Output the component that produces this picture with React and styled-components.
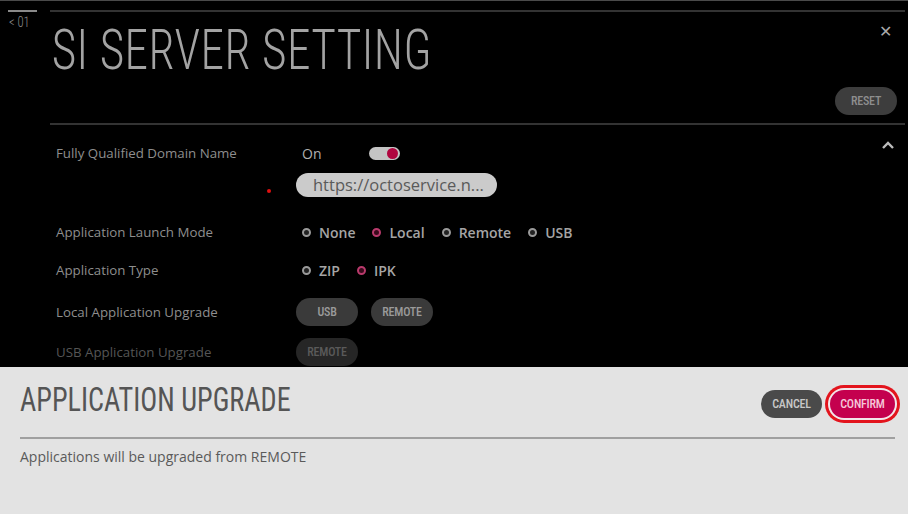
import React from "react";
import styled, { createGlobalStyle } from "styled-components";

const GlobalStyle = createGlobalStyle`
  html, body { margin: 0; padding: 0; background: #000; }
  body { width: 908px; height: 514px; overflow: hidden; font-family: "Open Sans", "Noto Sans", sans-serif; }
  * { box-sizing: border-box; }
`;

const COND = `"Roboto Condensed", "DejaVu Sans Condensed", "Liberation Sans Narrow", Roboto, sans-serif`;

const Screen = styled.div`
  position: relative;
  width: 908px;
  height: 514px;
  display: flex;
  background: #000;
  border-top: 1px solid #4a4a4a;
`;

const SideNav = styled.div`
  width: 50px;
  padding: 9px 0 0 8px;
  display: flex;
  flex-direction: column;
  gap: 2px;
`;

const IndexBar = styled.div`
  width: 29px;
  height: 2px;
  background: #8a8a8a;
`;

const IndexLabel = styled.span`
  font-family: ${COND};
  font-size: 14px;
  font-weight: 300;
  color: #8c8c8c;
  line-height: 17px;
  padding-left: 1px;
  display: inline-block;
  transform: scaleX(0.9);
  transform-origin: left center;
`;

const Main = styled.div`
  flex: 1;
  margin-right: 3px;
  display: flex;
  flex-direction: column;
`;

const Header = styled.div`
  margin-top: 9px;
  height: 115px;
  border-top: 2px solid #333;
  border-bottom: 2px solid #333;
  display: flex;
  justify-content: space-between;
`;

const Title = styled.h1`
  margin: 0;
  padding: 6px 0 0 2px;
  font-family: ${COND};
  font-weight: 300;
  font-size: 56px;
  line-height: 64px;
  color: #a3a3a3;
  letter-spacing: 0.5px;
  white-space: nowrap;
  transform: scaleX(0.845);
  transform-origin: left top;
`;

const HeaderSide = styled.div`
  display: flex;
  flex-direction: column;
  align-items: flex-end;
  justify-content: space-between;
  padding: 11px 8px 8px 0;
`;

const CloseBtn = styled.span`
  color: #aaa;
  font-size: 16px;
  line-height: 16px;
  margin-right: 5px;
`;

const Pill = styled.div`
  display: inline-flex;
  align-items: center;
  justify-content: center;
  height: ${(p) => p.$h || 28}px;
  min-width: ${(p) => p.$w || 62}px;
  padding: 0 10px;
  border-radius: 14px;
  background: ${(p) => p.$bg || "#3a3a3a"};
  color: ${(p) => p.$fg || "#9a9a9a"};
  font-family: ${COND};
  font-size: 12px;
  font-weight: 500;
  letter-spacing: -0.2px;
`;

const List = styled.div`
  padding: 16px 0 0 6px;
  display: flex;
  flex-direction: column;
`;

const Row = styled.div`
  position: relative;
  display: grid;
  grid-template-columns: 240px 1fr auto;
  align-items: ${(p) => (p.$top ? "start" : "center")};
  margin-top: ${(p) => p.$mt || 0}px;
  min-height: 24px;
`;

const Label = styled.div`
  font-size: 13.3px;
  line-height: 24px;
  color: ${(p) => (p.$dim ? "#555" : "#8e8e8e")};
`;

const Values = styled.div`
  display: flex;
  flex-direction: ${(p) => (p.$col ? "column" : "row")};
  align-items: ${(p) => (p.$col ? "flex-start" : "center")};
  gap: ${(p) => p.$gap || 0}px;
`;

const Line = styled.div`
  display: flex;
  align-items: center;
  height: 24px;
  padding-left: 6px;
`;

const OnText = styled.span`
  font-size: 14px;
  color: #b0b0b0;
  width: 67px;
`;

const Toggle = styled.div`
  position: relative;
  width: 31px;
  height: 13px;
  border-radius: 7px;
  background: #c4c4c4;
`;

const Knob = styled.span`
  position: absolute;
  right: 2px;
  top: 1px;
  width: 11px;
  height: 11px;
  border-radius: 50%;
  background: #b0063f;
`;

const UrlField = styled.div`
  margin-top: 8px;
  width: 201px;
  height: 24px;
  border-radius: 12px;
  background: #cbcbcb;
  color: #5a5a5a;
  font-size: 16.5px;
  line-height: 24px;
  padding-left: 17px;
  white-space: nowrap;
`;

const Marker = styled.span`
  position: absolute;
  left: 211px;
  top: 48px;
  width: 4px;
  height: 4px;
  border-radius: 50%;
  background: #e01010;
`;

const Chevron = styled.svg`
  margin: -1px 10px 0 0;
`;

const Radio = styled.span`
  display: inline-flex;
  align-items: center;
  gap: 8px;
  margin-right: 17px;
  font-size: 14px;
  font-weight: 600;
  color: #a5a5a5;
`;

const Dot = styled.span`
  width: 9px;
  height: 9px;
  border-radius: 50%;
  border: 2.5px solid ${(p) => (p.$on ? "#b93a6c" : "#9a9a9a")};
  background: ${(p) => (p.$on ? "#3a0a1c" : "#222")};
`;

const Dialog = styled.div`
  position: absolute;
  left: 0;
  right: 0;
  bottom: 0;
  height: 147px;
  background: #e3e3e3;
  padding: 0 13px 0 20px;
  display: flex;
  flex-direction: column;
`;

const DialogHead = styled.div`
  display: flex;
  justify-content: space-between;
  align-items: flex-start;
  height: 72px;
  padding-top: 12px;
  border-bottom: 2px solid #a0a0a0;
`;

const DialogTitle = styled.h2`
  margin: 0;
  font-family: ${COND};
  font-weight: 400;
  font-size: 34px;
  line-height: 40px;
  color: #555;
  white-space: nowrap;
  transform: scaleX(0.83);
  transform-origin: left center;
`;

const Actions = styled.div`
  display: flex;
  align-items: center;
  gap: 8px;
  margin-top: 11px;
`;

const ConfirmBtn = styled(Pill)`
  box-shadow: 0 0 0 2px #f2e6ea, 0 0 0 5px #e3141d;
`;

const DialogText = styled.p`
  margin: 8px 0 0;
  font-size: 14px;
  color: #5a5a5a;
`;

const radios = (items, on) =>
  items.map((t) => (
    <Radio key={t}>
      <Dot $on={t === on} />
      {t}
    </Radio>
  ));

export default function App() {
  return (
    <>
      <GlobalStyle />
      <Screen>
        <SideNav>
          <IndexBar />
          <IndexLabel>&lt; 01</IndexLabel>
        </SideNav>
        <Main>
          <Header>
            <Title>SI SERVER SETTING</Title>
            <HeaderSide>
              <CloseBtn>✕</CloseBtn>
              <Pill $bg="#3d3d3d" $fg="#8e8e8e">RESET</Pill>
            </HeaderSide>
          </Header>
          <List>
            <Row $top>
              <Label>Fully Qualified Domain Name</Label>
              <Values $col>
                <Line>
                  <OnText>On</OnText>
                  <Toggle>
                    <Knob />
                  </Toggle>
                </Line>
                <UrlField>https://octoservice.n...</UrlField>
              </Values>
              <Chevron width="14" height="10" viewBox="0 0 14 10">
                <path d="M2 8 L7 3 L12 8" fill="none" stroke="#bbb" strokeWidth="2.4" />
              </Chevron>
              <Marker />
            </Row>
            <Row $mt={23}>
              <Label>Application Launch Mode</Label>
              <Values>
                <Line>{radios(["None", "Local", "Remote", "USB"], "Local")}</Line>
              </Values>
            </Row>
            <Row $mt={14}>
              <Label>Application Type</Label>
              <Values>
                <Line>{radios(["ZIP", "IPK"], "IPK")}</Line>
              </Values>
            </Row>
            <Row $mt={16}>
              <Label>Local Application Upgrade</Label>
              <Values $gap={13}>
                <Pill>USB</Pill>
                <Pill>REMOTE</Pill>
              </Values>
            </Row>
            <Row $mt={12}>
              <Label $dim>USB Application Upgrade</Label>
              <Values>
                <Pill $bg="#262626" $fg="#5a5a5a">REMOTE</Pill>
              </Values>
            </Row>
          </List>
        </Main>
        <Dialog>
          <DialogHead>
            <DialogTitle>APPLICATION UPGRADE</DialogTitle>
            <Actions>
              <Pill $bg="#4a4a4a" $fg="#c8c8c8" $w={61}>CANCEL</Pill>
              <ConfirmBtn $bg="#c4004e" $fg="#f5c6d8" $w={65}>CONFIRM</ConfirmBtn>
            </Actions>
          </DialogHead>
          <DialogText>Applications will be upgraded from REMOTE</DialogText>
        </Dialog>
      </Screen>
    </>
  );
}
